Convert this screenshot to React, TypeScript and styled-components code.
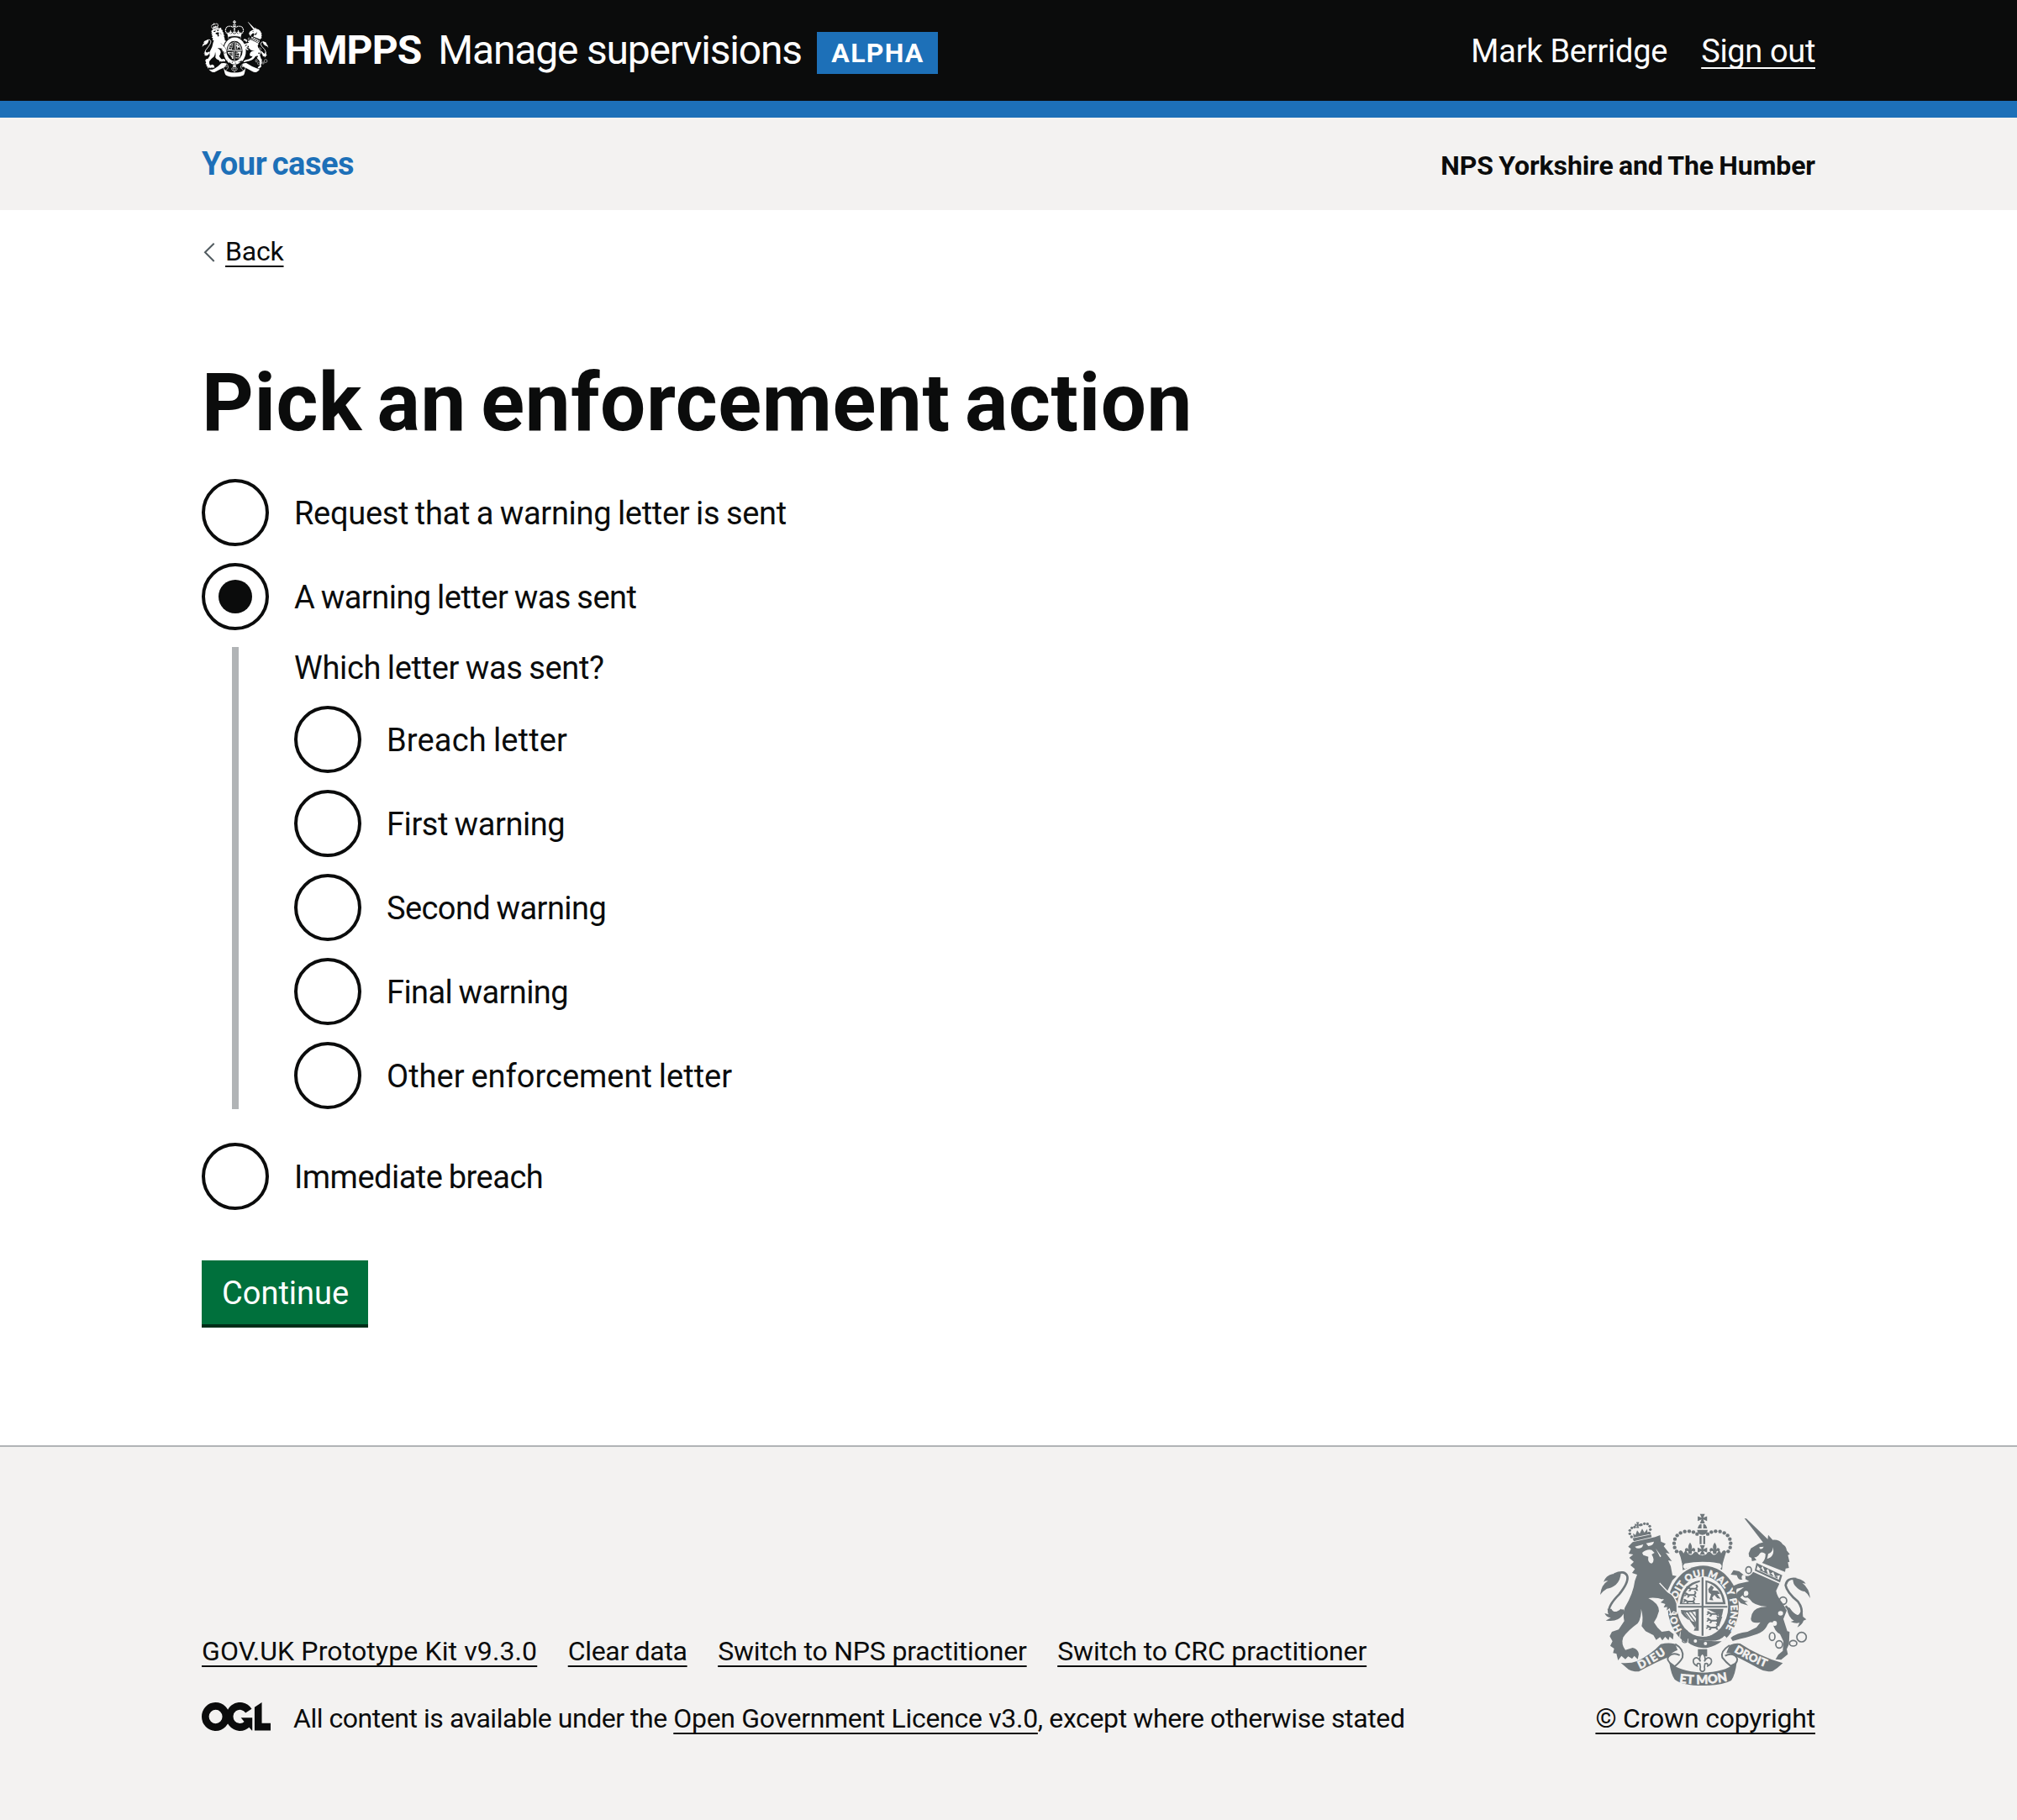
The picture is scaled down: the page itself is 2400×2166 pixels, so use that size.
import React, { useState } from 'react';
import styled, { createGlobalStyle } from 'styled-components';

const ink = '#0b0c0c';
const blue = '#1d70b8';
const pale = '#f3f2f1';
const grey = '#b1b4b6';
const crestGrey = '#6f777b';

const GlobalStyle = createGlobalStyle`
  *, *::before, *::after { box-sizing: border-box; }
  body {
    margin: 0;
    background: #fff;
    color: ${ink};
    font-family: Roboto, "Liberation Sans", sans-serif;
    font-kerning: normal;
  }
`;

const Container = styled.div`
  width: 1920px;
  margin: 0 auto;
`;

/* ---------- header ---------- */

const Header = styled.header`
  height: 140px;
  background: ${ink};
  border-bottom: 20px solid ${blue};
  color: #fff;
`;

const HeaderRow = styled(Container)`
  display: flex;
  align-items: flex-start;
`;

const HeaderCrest = styled.div`
  width: 80px;
  height: 68px;
  margin: 24px 18.5px 0 0;
  svg { display: block; }
`;

const Organisation = styled.span`
  margin: 29px 20px 0 0;
  font-size: 48px;
  line-height: 61px;
  font-weight: 700;
  letter-spacing: -0.9px;
`;

const Service = styled.span`
  width: 451px;
  margin-top: 29px;
  font-size: 48px;
  line-height: 61px;
  letter-spacing: -1.2px;
  white-space: nowrap;
`;

const PhaseTag = styled.strong`
  width: 144px;
  height: 50px;
  margin-top: 38px;
  padding-left: 17px;
  background: ${blue};
  font-size: 32px;
  line-height: 50px;
  letter-spacing: 1.3px;
`;

const Account = styled.div`
  display: flex;
  gap: 40px;
  margin: 36px 0 0 auto;
  font-size: 38px;
  line-height: 50px;
  letter-spacing: -0.25px;
`;

const Link = styled.a<{ $spacing?: number }>`
  color: inherit;
  letter-spacing: ${(p) => p.$spacing ?? 0}px;
  text-decoration: underline;
  text-decoration-thickness: 2px;
  text-decoration-skip-ink: none;
  text-underline-offset: 6px;
  white-space: nowrap;
`;

const Nav = styled.nav`
  height: 110px;
  background: ${pale};
`;

const NavRow = styled(Container)`
  display: flex;
  justify-content: space-between;
`;

const NavLink = styled.a`
  padding-top: 30px;
  color: ${blue};
  font-size: 38px;
  line-height: 50px;
  font-weight: 700;
  letter-spacing: -0.45px;
  word-spacing: -2.5px;
`;

const Region = styled.span`
  padding-top: 37px;
  font-size: 32px;
  line-height: 40px;
  font-weight: 700;
  letter-spacing: -0.1px;
  word-spacing: -1.5px;
`;

/* ---------- page ---------- */

const Main = styled.main`
  width: 1920px;
  height: 1470px;
  margin: 0 auto;
  padding-top: 29px;
`;

const BackRow = styled.div`
  display: flex;
  align-items: flex-start;
  height: 40px;
  font-size: 32px;
  line-height: 40px;
`;

const Chevron = styled.svg`
  width: 28px;
  height: 40px;
`;

const Heading = styled.h1`
  margin: 110px 0 41px;
  font-size: 96px;
  line-height: 100px;
  font-weight: 700;
  letter-spacing: 0.6px;
  word-spacing: -7px;
`;

const RadioList = styled.div`
  display: flex;
  flex-direction: column;
  gap: 20px;
`;

const RadioRow = styled.label`
  display: flex;
  gap: 30px;
  height: 80px;
`;

const RadioInput = styled.input`
  appearance: none;
  display: grid;
  place-items: center;
  width: 80px;
  height: 80px;
  margin: 0;
  border: 4px solid ${ink};
  border-radius: 50%;
  background: #fff;

  &:checked::before {
    content: '';
    width: 40px;
    height: 40px;
    border-radius: 50%;
    background: ${ink};
  }
`;

const RadioText = styled.span<{ $spacing: number }>`
  padding-top: 16px;
  font-size: 38px;
  line-height: 50px;
  letter-spacing: ${(p) => p.$spacing}px;
  word-spacing: -1.5px;
`;

const Conditional = styled.fieldset`
  margin: 0 0 20px 36px;
  padding: 0 0 0 66px;
  border: 0;
  border-left: 8px solid ${grey};
`;

const Question = styled.div`
  margin-bottom: 20px;
  font-size: 38px;
  line-height: 50px;
  letter-spacing: -0.32px;
  word-spacing: -1.5px;
`;

const Button = styled.button`
  display: block;
  width: 198px;
  height: 80px;
  margin: 60px 0 0;
  padding: 2px 0 0 24px;
  border: 0;
  border-bottom: 4px solid #002d18;
  background: #00703c;
  color: #fff;
  font: 400 38px/74px Roboto, "Liberation Sans", sans-serif;
  text-align: left;
`;

/* ---------- footer ---------- */

const Footer = styled.footer`
  height: 446px;
  padding-top: 78px;
  border-top: 2px solid ${grey};
  background: ${pale};
  font-size: 32px;
  line-height: 40px;
`;

const FooterRow = styled(Container)`
  display: flex;
  justify-content: space-between;
  align-items: flex-end;
`;

const FooterMeta = styled.div`
  display: flex;
  flex-direction: column;
  gap: 40px;
`;

const FooterLinks = styled.div`
  display: flex;
  gap: 36.5px;
`;

const Licence = styled.div`
  display: flex;
  align-items: flex-start;
  gap: 27px;
  height: 40px;
  white-space: pre;
`;

const LicenceText = styled.span<{ $spacing: number }>`
  letter-spacing: ${(p) => p.$spacing}px;
`;

const OglLogo = styled.svg`
  width: 82px;
  height: 34px;
  margin-top: 1px;
`;

const Copyright = styled.div`
  display: flex;
  flex-direction: column;
  align-items: flex-end;
  gap: 15px;
  svg { display: block; }
`;

/* ---------- royal arms ---------- */

const CrestText = styled.text`
  font-family: Lato, Roboto, sans-serif;
  font-weight: 900;
`;

const pearls: [number, number][] = [
  [345, 199], [338, 185], [336, 170], [339, 155], [347, 142], [359, 133], [374, 128], [390, 127], [405, 130], [418, 137],
];
const lionPearls: [number, number][] = [
  [184, 147], [178, 136], [178, 124], [185, 115], [195, 112], [219, 104], [230, 100], [241, 101], [249, 109], [251, 121], [248, 134],
];

const Lys = ({ x, y, s = 1 }: { x: number; y: number; s?: number }) => (
  <path
    transform={`translate(${x} ${y}) scale(${s})`}
    d="M0 -18Q9 -6 4 4Q8 -4 14 0Q19 6 12 12Q12 6 6 9L5 17H-5L-6 9Q-12 6 -12 12Q-19 6 -14 0Q-8 -4 -4 4Q-9 -6 0 -18Z"
  />
);

const Pattee = ({ x, y, s = 1 }: { x: number; y: number; s?: number }) => (
  <path
    transform={`translate(${x} ${y}) scale(${s})`}
    d="M-9 -17H9L3 -3L17 -9V9L3 3L9 17H-9L-3 3L-17 9V-9L-3 -3Z"
  />
);

const Beast = ({ x, y }: { x: number; y: number }) => (
  <path
    transform={`translate(${x} ${y})`}
    d="M0 4L6 0L12 4L17 7H34L38 2L34 -4L40 -5L44 2L40 9L44 18H38L34 13H20L16 19H9L14 12L8 10L3 15L-1 12L5 7Z"
  />
);

function Crest({ color, cut, width, height, plain = false }: {
  color: string; cut: string; width: number; height: number; plain?: boolean;
}) {
  const id = plain ? 'arms-small' : 'arms-large';
  return (
    <svg
      width={width}
      height={height}
      viewBox={plain ? '66 62 762 620' : '60 60 780 630'}
      preserveAspectRatio="none"
      fill={color}
      aria-hidden="true"
    >
      <defs>
        <path id={`${id}-garter`} d="M364 480A98 118 0 1 1 522 472" />
        <path id={`${id}-left`} d="M214 619Q266 596 314 560" />
        <path id={`${id}-mid`} d="M354 667Q437 680 530 661" />
        <path id={`${id}-right`} d="M549 557Q602 590 670 616" />
      </defs>

      {/* lion's crown */}
      {lionPearls.map(([x, y]) => <circle key={`${x}-${y}`} cx={x} cy={y} r="5" />)}
      <Pattee x={206} y={105} s={0.6} />
      <path d="M188 152L254 139L256 148L192 163Z" />
      <path d="M191 149L190 134L198 141L204 124L213 136L222 118L230 132L240 119L241 131L247 128L249 137Z" />

      {/* lion's tail */}
      <path d="M72 354Q76 318 100 304Q90 304 84 308Q92 286 116 280L146 277Q144 304 128 318Q110 332 96 332Q82 340 72 354Z" />
      <path d="M122 281Q160 264 169 288Q174 310 140 352Q98 394 104 418Q112 440 156 408" fill="none" stroke={color} strokeWidth="8" />
      <path d="M98 404L102 424L88 420Q94 434 110 436L92 446Q120 450 134 442Q150 434 160 414L146 404Q122 424 112 404Z" />

      {/* lion */}
      <path d="M172 182L188 166L268 148L286 141L289 164L306 172L299 181L320 207L306 204L328 234L315 231L324 252L330 284L345 287L330 302L313 338L300 372Q270 362 244 366Q282 384 282 412Q276 436 264 452Q274 470 292 486L318 482L334 494L332 514L320 503L316 516L304 504L294 517L286 505L272 515L262 498L234 484L220 466Q228 436 218 404Q220 436 206 456Q170 482 154 506Q146 530 162 551L188 543Q208 548 210 566L206 584L194 572L186 582L172 574L162 584L148 572L136 588L130 564L118 562L122 546L108 536L116 520L106 502L114 486L138 478L158 448Q152 422 160 400Q190 350 196 304L204 282L186 276L196 262L180 248L192 236L176 222L190 210L174 207L182 190Z" />
      <g fill={cut}>
        <path d="M196 182L226 174L222 184Q206 194 196 182ZM236 170L264 164Q262 178 244 180Z" />
        <path d="M222 204Q238 190 256 194L266 204L256 210Q270 232 256 242Q240 240 244 218L226 212Z" />
        <path d="M270 188L290 216L286 220Z" />
      </g>

      {/* imperial crown */}
      {pearls.map(([x, y]) => (
        <React.Fragment key={`${x}-${y}`}>
          <circle cx={x} cy={y} r="6.6" />
          <circle cx={874 - x} cy={y} r="6.6" />
        </React.Fragment>
      ))}
      <Pattee x={437} y={82} s={0.98} />
      <path d="M420 117Q424 100 434 101V117ZM440 101Q450 100 454 117H440ZM418 122H456Q454 139 437 140Q420 139 418 122Z" />
      <path d="M427 144H434V173H427ZM440 144H447V173H440Z" />
      <Lys x={393} y={188} s={1.15} />
      <Lys x={481} y={188} s={1.15} />
      <Pattee x={437} y={194} s={1} />
      <path d="M352 200Q362 188 370 206Q376 190 384 204Q394 218 404 206Q414 192 424 210L437 214L450 210Q460 192 470 206Q480 218 490 204Q498 190 504 206Q512 188 522 200Q516 218 510 240Q437 222 364 240Q360 218 352 200Z" />
      <path d="M364 238Q437 220 510 238L507 266Q437 232 367 266Z" />
      <path d="M374 242Q437 230 500 242Q512 252 500 262Q437 236 374 262Q362 252 374 242Z" fill={cut} />

      {/* garter and shield */}
      <ellipse cx="440" cy="397" rx="133" ry="153" fill={cut} />
      <ellipse cx="440" cy="397" rx="127" ry="147" />
      <ellipse cx="438" cy="396" rx="91" ry="108" fill={cut} />
      <g>
        <path d="M434 292H441V394H526V400H441V500H434V400H350V394H434Z" />
        <path d="M428 302Q364 312 356 388H428V384H366Q372 322 428 308Z" />
        <Beast x={378} y={322} />
        <Beast x={372} y={345} />
        <Beast x={368} y={368} />
        <path d="M448 302Q510 312 520 388H448ZM454 310V380H510Q502 326 454 310Z" fillRule="evenodd" />
        <path d="M458 334L468 320L478 328L472 338L492 340L500 350L490 352L502 368L490 366L480 354L472 364L476 374L462 372L468 352L460 346Z" />
        <path d="M360 408Q392 412 424 404V482H406Q414 470 414 452Q382 448 362 420ZM372 418L412 474Q416 440 412 414Z" fillRule="evenodd" />
        <path d="M374 416L410 466M384 414L414 454M396 412L418 440" fill="none" stroke={color} strokeWidth="4" />
        <Beast x={452} y={412} />
        <Beast x={452} y={436} />
        <Beast x={450} y={461} />
        <path d="M452 404H512L508 424L500 446L494 424ZM494 432L508 432L496 468L488 458Z" />
      </g>
      <path d="M360 482Q350 500 360 524Q380 530 386 510L462 518Q500 520 516 500L524 508Q496 544 440 552Q390 550 356 524Z" fill={cut} />
      <path d="M388 505Q430 520 506 520Q474 544 440 544Q404 540 386 524Z" />
      <path d="M368 482Q388 478 384 494Q398 500 382 508Q386 528 370 524Q358 518 376 502Q362 492 368 482Z" fill="none" stroke={color} strokeWidth="4" />
      <g fill={cut}>
        <circle cx="412" cy="519" r="6" />
        <circle cx="448" cy="528" r="6" />
      </g>
      {!plain && (
        <CrestText fontSize="34" fill={cut} stroke={cut} strokeWidth="1.4">
          <textPath href={`#${id}-garter`} startOffset="0" textLength="490">HON SOIT QUI MAL Y PENSE</textPath>
        </CrestText>
      )}

      {/* lion's raised arm, lying over the garter */}
      <path
        d="M284 312L314 344Q338 356 346 386L347 420L334 414L325 426L319 405L307 415L309 400L295 402L302 388L284 382L298 370"
        stroke={cut}
        strokeWidth="4"
      />

      {/* unicorn */}
      <path d="M587 81L594 82L673 158L656 170Z" />
      <path d="M602 206L610 188L640 170L658 166L670 156L672 140L688 158Q712 156 724 174Q736 180 738 196L749 209L742 212L748 236L742 238L746 258L734 260L732 272L650 240Q664 226 662 208Q650 198 642 206Q634 220 622 220L630 230L614 234L612 222L604 218Z" />
      <path d="M640 184L656 182Q652 192 642 190ZM672 208Q690 202 688 184Q698 216 668 226Z" fill={cut} />
      <path d="M630 240L722 284L714 310L624 268Z" />
      <path d="M634 250L644 262L652 252L660 270L672 262L678 280L690 272L696 288L714 284L710 300L630 264Z" fill={cut} />
      <path d="M648 258L654 270L666 266L672 282L684 278L692 290L704 288L706 296L640 266Z" />
      <path d="M618 272L712 314L700 340Q704 362 722 382L738 410L726 440L740 484L748 486L746 530L738 548L742 566L718 586L698 584L708 568L724 554L726 520L714 494Q694 486 688 454Q676 446 666 468Q654 488 632 494Q610 502 574 511L545 519L538 508Q558 490 598 486L630 470L644 452Q612 458 610 440Q612 404 646 398L668 396Q620 394 606 370L584 352L572 364L586 374L600 378L588 380L600 392L574 384L556 364L562 344L586 326L560 332L556 346L546 336L548 322L566 314L604 306L588 296Q566 308 560 284L538 282L548 266L568 270L588 286Q606 292 618 272Z" />
      <g fill="none" stroke={color} strokeWidth="5">
        <ellipse cx="602" cy="266" rx="10" ry="12" />
        <ellipse cx="593" cy="349" rx="12" ry="13" />
        <ellipse cx="725" cy="375" rx="13" ry="13" />
        <ellipse cx="686" cy="503" rx="10" ry="14" />
        <ellipse cx="711" cy="531" rx="12" ry="13" />
        <ellipse cx="761" cy="527" rx="13" ry="10" />
        <circle cx="791" cy="505" r="17" />
      </g>
      <g fill={cut}>
        <ellipse cx="584" cy="292" rx="7" ry="9" />
        <ellipse cx="716" cy="420" rx="9" ry="8" />
        <ellipse cx="695" cy="456" rx="8" ry="9" />
        <ellipse cx="593" cy="349" rx="8" ry="9" />
      </g>

      {/* unicorn's tail */}
      <path d="M822 366Q818 330 794 312L806 314Q792 294 760 294Q758 316 776 330Q790 342 802 342Q814 350 822 366Z" />
      <path d="M772 297Q738 292 734 320Q738 344 778 378Q796 402 790 426Q778 446 734 394" fill="none" stroke={color} strokeWidth="8" />
      <path d="M738 400Q744 438 764 446L752 450Q768 458 784 454L776 470Q794 460 798 446L808 442L796 432L794 404L782 424Q770 434 748 400Z" />

      {/* motto ribbon */}
      <path d="M146 597Q180 600 206 590Q254 566 288 530Q328 520 352 536L356 548Q318 562 322 574Q272 594 210 628Q178 628 166 614Z" />
      <path d="M724 598Q640 574 572 528Q536 524 520 548L512 562Q548 560 556 574Q604 598 640 618Q662 632 688 626Q706 616 724 598Z" />
      <path d="M340 530Q372 548 366 578Q358 594 338 610L320 596Q304 580 324 568Q340 560 356 570" fill={cut} stroke={color} strokeWidth="6" />
      <path d="M534 534Q500 556 508 578Q520 594 538 608L554 600Q570 584 552 570Q536 562 518 572" fill={cut} stroke={color} strokeWidth="6" />
      <path d="M318 592Q350 628 437 632Q526 630 560 592Q554 642 540 660Q508 678 437 678Q366 678 338 656Q326 642 318 592Z" />
      {!plain && (
        <>
          <CrestText fontSize="39" fill={cut} stroke={cut} strokeWidth="1.6">
            <textPath href={`#${id}-left`} startOffset="0" textLength="108">DIEU</textPath>
          </CrestText>
          <CrestText fontSize="44" fill={cut} stroke={cut} strokeWidth="1.6">
            <textPath href={`#${id}-mid`} startOffset="0" textLength="174">ET MON</textPath>
          </CrestText>
          <CrestText fontSize="39" fill={cut} stroke={cut} strokeWidth="1.6">
            <textPath href={`#${id}-right`} startOffset="0" textLength="126">DROIT</textPath>
          </CrestText>
        </>
      )}

      {/* fleur-de-lis badge */}
      <path d="M421 548H454V574H421Z" />
      <path
        d="M437 562Q452 576 444 592Q456 570 468 584Q474 600 456 608Q458 596 446 600L444 612Q448 626 437 628Q426 626 430 612L428 600Q416 596 418 608Q400 600 406 584Q418 570 430 592Q422 576 437 562Z"
        fill={cut}
        stroke={color}
        strokeWidth="5"
      />
    </svg>
  );
}

/* ---------- content ---------- */

interface Option { text: string; spacing: number }

const actions: Option[] = [
  { text: 'Request that a warning letter is sent', spacing: -0.3 },
  { text: 'A warning letter was sent', spacing: -0.52 },
  { text: 'Immediate breach', spacing: -0.52 },
];

const letters: Option[] = [
  { text: 'Breach letter', spacing: 0.16 },
  { text: 'First warning', spacing: -0.42 },
  { text: 'Second warning', spacing: -0.58 },
  { text: 'Final warning', spacing: -0.6 },
  { text: 'Other enforcement letter', spacing: 0 },
];

const footerLinks: Option[] = [
  { text: 'GOV.UK Prototype Kit v9.3.0', spacing: 0.12 },
  { text: 'Clear data', spacing: -0.32 },
  { text: 'Switch to NPS practitioner', spacing: -0.19 },
  { text: 'Switch to CRC practitioner', spacing: -0.15 },
];

function Radio({ name, option, checked, onPick }: {
  name: string; option: Option; checked: boolean; onPick: (text: string) => void;
}) {
  return (
    <RadioRow>
      <RadioInput type="radio" name={name} checked={checked} onChange={() => onPick(option.text)} />
      <RadioText $spacing={option.spacing}>{option.text}</RadioText>
    </RadioRow>
  );
}

export default function App() {
  const [action, setAction] = useState(actions[1].text);
  const [letter, setLetter] = useState('');

  return (
    <>
      <GlobalStyle />
      <Header>
        <HeaderRow>
          <HeaderCrest>
            <Crest color="#fff" cut={ink} width={80} height={68} plain />
          </HeaderCrest>
          <Organisation>HMPPS</Organisation>
          <Service>Manage supervisions</Service>
          <PhaseTag>ALPHA</PhaseTag>
          <Account>
            <span>Mark Berridge</span>
            <Link $spacing={-0.35}>Sign out</Link>
          </Account>
        </HeaderRow>
      </Header>
      <Nav>
        <NavRow>
          <NavLink>Your cases</NavLink>
          <Region>NPS Yorkshire and The Humber</Region>
        </NavRow>
      </Nav>
      <Main>
        <BackRow>
          <Chevron viewBox="0 0 28 40" fill="none" stroke="#505a5f" strokeWidth="2">
            <path d="M14.7 10.7L4 21.3L14.7 32" />
          </Chevron>
          <Link $spacing={-0.2}>Back</Link>
        </BackRow>
        <Heading>Pick an enforcement action</Heading>
        <RadioList>
          {actions.map((option) => (
            <React.Fragment key={option.text}>
              <Radio name="action" option={option} checked={action === option.text} onPick={setAction} />
              {option === actions[1] && action === option.text && (
                <Conditional>
                  <Question>Which letter was sent?</Question>
                  <RadioList>
                    {letters.map((item) => (
                      <Radio key={item.text} name="letter" option={item} checked={letter === item.text} onPick={setLetter} />
                    ))}
                  </RadioList>
                </Conditional>
              )}
            </React.Fragment>
          ))}
        </RadioList>
        <Button type="button">Continue</Button>
      </Main>
      <Footer>
        <FooterRow>
          <FooterMeta>
            <FooterLinks>
              {footerLinks.map((link) => (
                <Link key={link.text} $spacing={link.spacing}>{link.text}</Link>
              ))}
            </FooterLinks>
            <Licence>
              <OglLogo viewBox="0 0 483.2 195.7" preserveAspectRatio="none" aria-label="OGL">
                <circle cx="97.8" cy="97.8" r="72.4" fill="none" stroke={ink} strokeWidth="50.8" />
                <path d="M329 58.5A72.4 72.4 0 1 0 318 150" fill="none" stroke={ink} strokeWidth="50.8" />
                <path d="M274.9 105.7H354.9V193.5H351.9L299.2 133.2Z" fill={ink} />
                <path d="M421.5 142.8V0L370.8 32.4V193.5H483.2V142.8Z" fill={ink} />
              </OglLogo>
              <span>
                <LicenceText $spacing={-0.46}>All content is available under the </LicenceText>
                <Link $spacing={-0.31}>Open Government Licence v3.0</Link>
                <LicenceText $spacing={-0.38}>, except where otherwise stated</LicenceText>
              </span>
            </Licence>
          </FooterMeta>
          <Copyright>
            <Crest color={crestGrey} cut={pale} width={260} height={210} />
            <Link $spacing={-0.2}>© Crown copyright</Link>
          </Copyright>
        </FooterRow>
      </Footer>
    </>
  );
}
